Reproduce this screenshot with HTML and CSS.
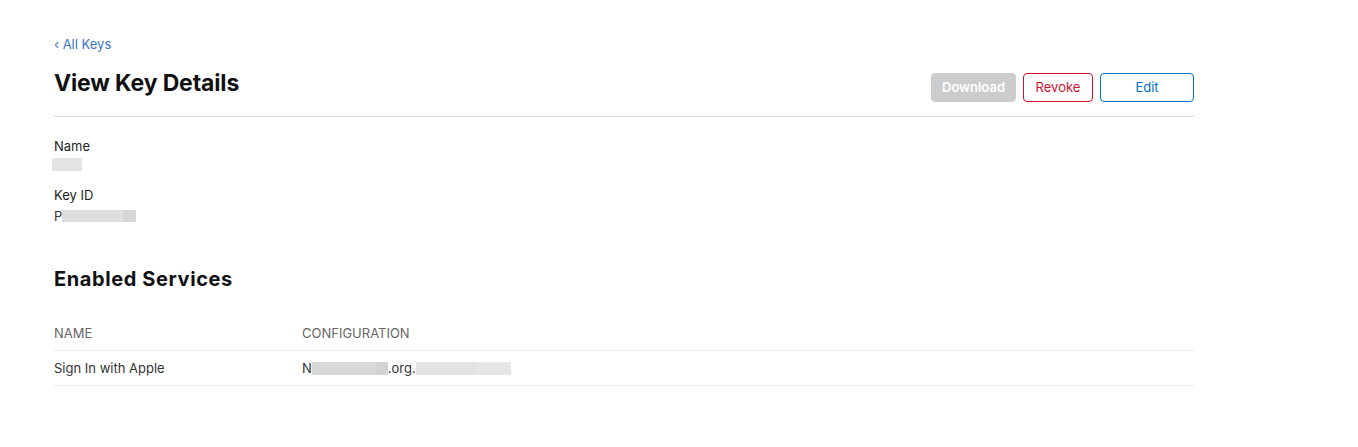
FILE: index.html
```html
<!DOCTYPE html>
<html>
<head>
<meta charset="utf-8">
<link rel="stylesheet" href="styles.css">
</head>
<body>
<div class="page">
  <a class="back" href="#">&lsaquo; All Keys</a>
  <div class="header">
    <h1 class="title">View Key Details</h1>
    <div class="actions">
      <button class="btn btn-disabled">Download</button>
      <button class="btn btn-revoke">Revoke</button>
      <button class="btn btn-edit">Edit</button>
    </div>
  </div>
  <div class="field">
    <div class="label">Name</div>
    <div class="value"><span class="mask mask-name"></span></div>
  </div>
  <div class="field field-second">
    <div class="label">Key ID</div>
    <div class="value">P<span class="mask mask-key"></span><span class="mask mask-key-end"></span></div>
  </div>
  <h2 class="section-title">Enabled Services</h2>
  <div class="table">
    <div class="row row-head">
      <div class="cell cell-name">NAME</div>
      <div class="cell">CONFIGURATION</div>
    </div>
    <div class="row">
      <div class="cell cell-name">Sign In with Apple</div>
      <div class="cell">N<span class="mask mask-c1"></span><span class="mask mask-c1b"></span>.org.<span class="mask mask-c2"></span><span class="mask mask-c2b"></span></div>
    </div>
  </div>
</div>
</body>
</html>
```
FILE: styles.css
```css
* { box-sizing: border-box; }
body {
  margin: 0;
  background: #fff;
  font-family: Inter, "Liberation Sans", Arial, sans-serif;
  color: #333;
}
.page {
  width: 1194px;
  padding: 36px 0 0 54px;
}
.back {
  display: block;
  font-size: 13px;
  line-height: 16px;
  color: #3a75c4;
  text-decoration: none;
}
.header {
  display: flex;
  justify-content: space-between;
  align-items: flex-start;
  margin-top: 16px;
  padding-bottom: 14px;
  border-bottom: 1px solid #dcdcdc;
}
.title {
  margin: 0;
  font-family: Inter, "Liberation Sans", sans-serif;
  font-size: 23px;
  line-height: 30px;
  font-weight: 700;
  color: #111;
  letter-spacing: -0.15px;
}
.actions {
  display: flex;
  gap: 7px;
  margin-top: 5px;
}
.btn {
  height: 29px;
  border-radius: 4px;
  font-family: Inter, "Liberation Sans", Arial, sans-serif;
  font-size: 13px;
  background: #fff;
  padding: 0 0 2px;
}
.btn-disabled {
  width: 85px;
  background: #cccccc;
  border: 1px solid #cccccc;
  color: #fff;
  font-weight: 600;
}
.btn-revoke {
  width: 70px;
  border: 1px solid #d30f2d;
  color: #d30f2d;
}
.btn-edit {
  width: 94px;
  border: 1px solid #0070c9;
  color: #0070c9;
}
.field { margin-top: 20px; }
.field-second { margin-top: 15px; }
.label {
  font-size: 13px;
  line-height: 18px;
  color: #1d1d1f;
}
.value {
  font-size: 13px;
  line-height: 18px;
  margin-top: 3px;
  color: #333;
  display: flex;
  align-items: center;
}
.mask {
  display: inline-block;
  height: 13px;
  background: #e3e3e3;
}
.mask-name { width: 30px; margin-left: -2px; }
.mask-key { width: 61px; height: 12px; background: #dedede; }
.mask-key-end { width: 13px; height: 12px; background: #d6d6d6; }
.section-title {
  margin: 42px 0 0;
  font-family: Inter, "Liberation Sans", sans-serif;
  font-size: 20px;
  line-height: 24px;
  font-weight: 700;
  color: #111;
  letter-spacing: 0.6px;
}
.table { margin-top: 33px; width: 1140px; }
.row {
  display: flex;
  align-items: center;
  height: 35px;
  border-bottom: 1px solid #ececec;
  font-size: 13px;
  color: #333;
}
.row-head {
  height: 27px;
  align-items: flex-start;
  color: #666;
  line-height: 18px;
}
.cell-name { width: 248px; }
.row .cell:last-child { display: flex; align-items: center; }
.mask-c1 { width: 64px; background: #d9d9d9; }
.mask-c1b { width: 12px; background: #d3d3d3; }
.mask-c2 { width: 60px; background: #e3e3e3; }
.mask-c2b { width: 35px; background: #e6e6e6; }
```
